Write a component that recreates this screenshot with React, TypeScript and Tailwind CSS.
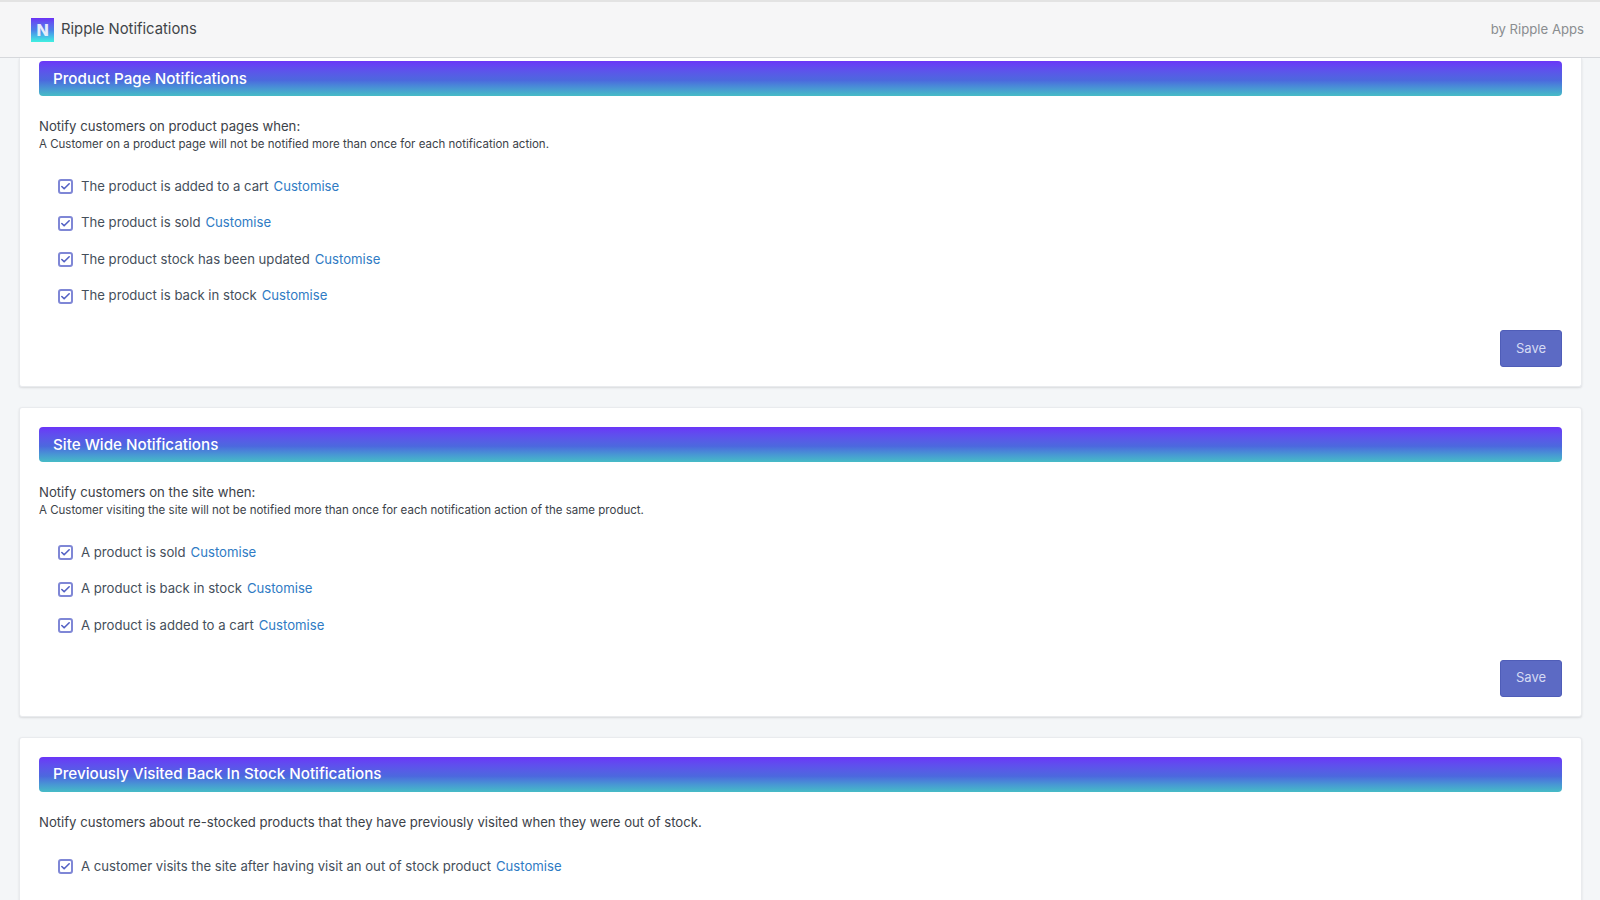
import React from 'react';
import { Check } from 'lucide-react';

interface SectionProps {
  title: string;
  intro: string;
  note?: string;
  options: string[];
  showSave?: boolean;
  className?: string;
}

function Option({ label }: { label: string }) {
  return (
    <label className="flex items-center h-[36.5px]">
      <span className="w-[15px] h-[15px] rounded-[3px] border-2 border-[#7f87d6] bg-white flex items-center justify-center">
        <Check className="w-[11px] h-[11px] text-[#5361c4]" strokeWidth={3.5} />
      </span>
      <span className="ml-[8px] text-[13.15px] text-[#454f5b]">{label}</span>
      <a className="ml-[5px] text-[13.15px] text-[#2f7bc4]">Customise</a>
    </label>
  );
}

function Section({ title, intro, note, options, showSave = true, className = '' }: SectionProps) {
  return (
    <section className={`bg-white border border-[#e9ebee] rounded-[3px] shadow-[0_1px_2px_rgba(63,63,68,0.15)] px-[19px] ${className}`}>
      <h2 className="h-[35px] flex items-center px-[14px] pt-[1px] rounded-[4px] text-[15.2px] font-medium text-white bg-gradient-to-b from-[#6a35f8] via-[#4c68de] via-55% to-[#46bcc6]">
        {title}
      </h2>
      <p className="mt-[21px] text-[13.15px] leading-[18px] text-[#3c4249]">{intro}</p>
      {note && <p className="text-[11.5px] leading-[18px] text-[#3c4249]">{note}</p>}
      <div className={`pl-[19px] ${note ? 'mt-[15.5px]' : 'mt-[18px]'}`}>
        {options.map((o) => (
          <Option key={o} label={o} />
        ))}
      </div>
      {showSave && (
        <div className="flex justify-end mt-[15.5px] pb-[19px]">
          <button className="w-[62px] h-[37px] rounded-[3px] bg-[#5c6ac4] border border-[#4f5db8] text-[13px] text-[#d5daf3]">
            Save
          </button>
        </div>
      )}
    </section>
  );
}

export default function App() {
  return (
    <div className="w-[1600px] h-[900px] overflow-hidden bg-[#f4f6f8] font-['Inter',sans-serif]">
      <header className="h-[58px] bg-[#f6f6f7] border-t-2 border-t-[#e3e3e3] border-b border-b-[#d6d8dc] flex items-center justify-between pl-[31px] pr-[16px]">
        <div className="flex items-center">
          <div className="w-[23px] h-[24px] flex items-center justify-center bg-gradient-to-b from-[#6a2ff5] via-[#4a80e8] to-[#40f0e0]">
            <span className="text-[16px] font-extrabold leading-none text-[#e4ecfb]">N</span>
          </div>
          <span className="ml-[7px] text-[14.8px] text-[#3f4447]">Ripple Notifications</span>
        </div>
        <span className="text-[13.15px] text-[#8a8d90]">by Ripple Apps</span>
      </header>
      <main className="pl-[19px] w-[1582px]">
        <Section
          className="border-t-0 rounded-t-none pt-[3px]"
          title="Product Page Notifications"
          intro="Notify customers on product pages when:"
          note="A Customer on a product page will not be notified more than once for each notification action."
          options={[
            'The product is added to a cart',
            'The product is sold',
            'The product stock has been updated',
            'The product is back in stock',
          ]}
        />
        <Section
          className="mt-[20px] pt-[19px]"
          title="Site Wide Notifications"
          intro="Notify customers on the site when:"
          note="A Customer visiting the site will not be notified more than once for each notification action of the same product."
          options={['A product is sold', 'A product is back in stock', 'A product is added to a cart']}
        />
        <Section
          className="mt-[20px] pt-[19px] pb-[40px]"
          title="Previously Visited Back In Stock Notifications"
          intro="Notify customers about re-stocked products that they have previously visited when they were out of stock."
          options={['A customer visits the site after having visit an out of stock product']}
          showSave={false}
        />
      </main>
    </div>
  );
}
